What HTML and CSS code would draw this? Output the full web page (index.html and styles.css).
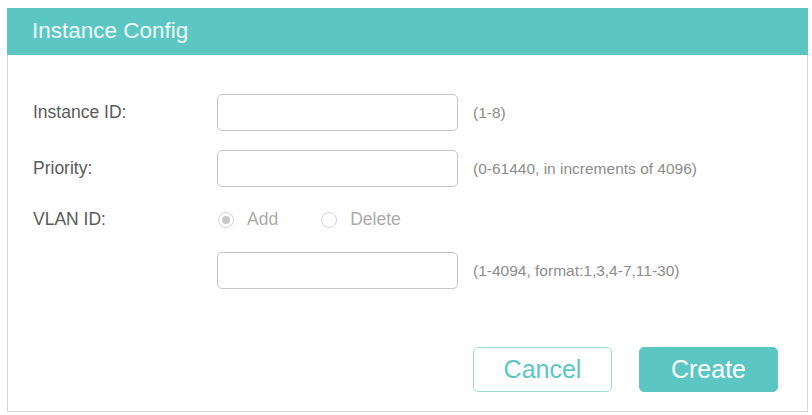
FILE: index.html
```html
<!DOCTYPE html>
<html>
<head>
<meta charset="utf-8">
<link rel="stylesheet" href="styles.css">
</head>
<body>
<div class="panel">
  <div class="header">Instance Config</div>
  <div class="body">
    <div class="row">
      <label class="label">Instance ID:</label>
      <input class="field" type="text">
      <span class="hint">(1-8)</span>
    </div>
    <div class="row">
      <label class="label">Priority:</label>
      <input class="field" type="text">
      <span class="hint">(0-61440, in increments of 4096)</span>
    </div>
    <div class="row radio-row">
      <label class="label">VLAN ID:</label>
      <span class="radio checked"></span><span class="radio-text">Add</span>
      <span class="radio"></span><span class="radio-text">Delete</span>
    </div>
    <div class="row">
      <span class="label"></span>
      <input class="field" type="text">
      <span class="hint">(1-4094, format:1,3,4-7,11-30)</span>
    </div>
    <div class="actions">
      <button class="btn btn-cancel">Cancel</button>
      <button class="btn btn-create">Create</button>
    </div>
  </div>
</div>
</body>
</html>
```
FILE: styles.css
```css
* { box-sizing: border-box; }
html, body { margin: 0; padding: 0; background: #fff; }
body {
  font-family: "Liberation Sans", Arial, sans-serif;
  padding: 8px 4px 3px 7px;
}
.panel {
  width: 801px;
  height: 404px;
  border: 1px solid #d6d6d6;
  border-top: none;
  display: flex;
  flex-direction: column;
}
.header {
  background: #5cc7c2;
  color: #eef9f8;
  height: 47px;
  font-size: 22.5px;
  line-height: 46px;
  padding-left: 25px;
  margin: 0 -1px;
}
.body {
  flex: 1;
  padding: 39px 29px 19px 25px;
  display: flex;
  flex-direction: column;
}
.row {
  display: flex;
  align-items: center;
  height: 37px;
  margin-bottom: 19px;
}
.radio-row { height: 27px; }
.label {
  width: 184px;
  flex: none;
  font-size: 17.5px;
  color: #5a5a5a;
}
.field {
  width: 241px;
  height: 37px;
  border: 1px solid #c6c6c6;
  border-radius: 5px;
  background: #fff;
  outline: none;
  margin: 0;
}
.hint {
  margin-left: 15px;
  font-size: 15.5px;
  color: #8c8c8c;
}
.radio {
  width: 16px;
  height: 16px;
  border: 1px solid #d4d4d4;
  border-radius: 50%;
  background: #fff;
  position: relative;
  margin-left: 1px;
  flex: none;
}
.radio.checked::after {
  content: "";
  position: absolute;
  left: 3px; top: 3px;
  width: 8px; height: 8px;
  border-radius: 50%;
  background: #c8c8c8;
}
.radio-text {
  font-size: 17.5px;
  color: #ababab;
  margin-left: 13px;
  margin-right: 42px;
}
.actions {
  margin-top: auto;
  display: flex;
  justify-content: flex-end;
  gap: 27px;
}
.btn {
  width: 139px;
  height: 45px;
  border-radius: 5px;
  font-family: "Liberation Sans", Arial, sans-serif;
  font-size: 25px;
  cursor: pointer;
  padding: 0;
}
.btn-cancel {
  background: #fff;
  border: 1px solid #9fdcd8;
  color: #5cc7c2;
}
.btn-create {
  background: #5cc7c2;
  border: 1px solid #5cc7c2;
  color: #fff;
}
```
